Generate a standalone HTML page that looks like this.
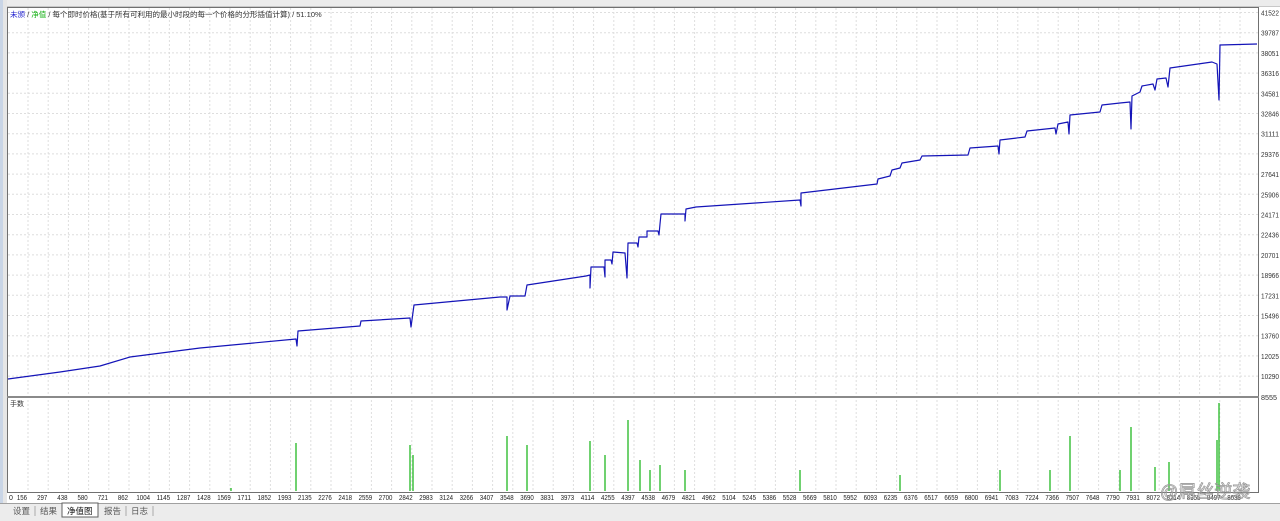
<!DOCTYPE html>
<html><head><meta charset="utf-8">
<style>
html,body{margin:0;padding:0;width:1280px;height:521px;overflow:hidden;background:#fff;font-family:"Liberation Sans","Noto Sans CJK SC",sans-serif;}
svg{position:absolute;left:0;top:0}
</style></head>
<body>
<svg id="s" width="1280" height="521" viewBox="0 0 1280 521" xmlns="http://www.w3.org/2000/svg" font-family="Liberation Sans, Noto Sans CJK SC, sans-serif">
<rect x="0" y="0" width="1280" height="521" fill="#fff"/>
<rect x="0" y="0" width="1280" height="7" fill="#ececec"/>
<line x1="0" y1="6.5" x2="1280" y2="6.5" stroke="#c8c8c8"/>
<rect x="0" y="0" width="3" height="503" fill="#c9d5e6"/>
<rect x="3" y="0" width="4" height="503" fill="#e6e6e6"/>
<g id="grid" stroke="#dedede" stroke-dasharray="2,2" stroke-width="1"></g>
<rect x="7.5" y="7.5" width="1251" height="485" fill="none" stroke="#707070"/>
<rect x="7" y="396" width="1252" height="2" fill="#8a8a8a"/>
<g id="ylab" font-size="7" fill="#333"></g>
<g id="xlab" font-size="7" fill="#222"></g>
<polyline id="eq" fill="none" stroke="#1414b8" stroke-width="1.2" stroke-linejoin="round"/>
<g id="spk" stroke="#22b822" stroke-width="1.3"></g>
<text x="10" y="17" font-size="7.5"><tspan fill="#2020d0">未颁</tspan><tspan fill="#333"> / </tspan><tspan fill="#10b010">净值</tspan><tspan fill="#333"> / 每个即时价格(基于所有可利用的最小时段的每一个价格的分形插值计算) / 51.10%</tspan></text>
<text x="10" y="406" font-size="7" fill="#333">手数</text>
<text x="1261" y="400" font-size="7" fill="#333" textLength="16" lengthAdjust="spacingAndGlyphs">8555</text>
<rect x="0" y="503" width="1280" height="18" fill="#ececec"/>
<line x1="0" y1="503.5" x2="1280" y2="503.5" stroke="#a0a0a0"/>
<rect x="62" y="503" width="36" height="14" fill="#fff" stroke="#606060"/>
<g font-size="8.5" fill="#555">
<text x="13" y="514">设置</text>
<line x1="35" y1="506" x2="35" y2="516" stroke="#aaa"/>
<text x="40" y="514">结果</text>
<text x="67" y="514" fill="#111">净值图</text>
<text x="104" y="514">报告</text>
<line x1="126" y1="506" x2="126" y2="516" stroke="#aaa"/>
<text x="131" y="514">日志</text>
<line x1="153" y1="506" x2="153" y2="516" stroke="#aaa"/>
</g>
<text x="1160" y="498" font-size="18" fill="none" stroke="#999" stroke-width="0.8">@屌丝逆袭</text>
</svg>
<script>
var NS="http://www.w3.org/2000/svg";
function el(p,t,a,txt){var e=document.createElementNS(NS,t);for(var k in a)e.setAttribute(k,a[k]);if(txt)e.textContent=txt;document.getElementById(p).appendChild(e);}
var xl="0 156 297 438 580 721 862 1004 1145 1287 1428 1569 1711 1852 1993 2135 2276 2418 2559 2700 2842 2983 3124 3266 3407 3548 3690 3831 3973 4114 4255 4397 4538 4679 4821 4962 5104 5245 5386 5528 5669 5810 5952 6093 6235 6376 6517 6659 6800 6941 7083 7224 7366 7507 7648 7790 7931 8072 8214 8355 8497 8638".split(" ");
for(var i=0;i<61;i++){var x=28+20.2*i;el("grid","line",{x1:x,y1:8,x2:x,y2:492});var s=xl[i+1];el("xlab","text",{x:x-6,y:500,"text-anchor":"middle",textLength:s.length*3.4,lengthAdjust:"spacingAndGlyphs"},s);}
el("xlab","text",{x:9,y:500},"0");
var yl="41522 39787 38051 36316 34581 32846 31111 29376 27641 25906 24171 22436 20701 18966 17231 15496 13760 12025 10290".split(" ");
for(var j=0;j<19;j++){var y=12.5+20.2*j;el("grid","line",{x1:8,y1:y,x2:1258,y2:y});el("ylab","text",{x:1261,y:y+3,textLength:18,lengthAdjust:"spacingAndGlyphs"},yl[j]);}
var pts=[[8,379],[60,372],[100,366],[130,357],[200,348],[296,339],[297,346],[298,331],[360,326],[361,321],[410,318],[411,327],[414,305],[500,297],[507,297],[507,310],[510,296],[525,296],[527,285],[586,276],[590,275],[590,288],[591,267],[604,267],[605,277],[605,260],[611,260],[612,264],[613,252],[625,253],[627,278],[628,243],[637,243],[638,247],[639,237],[647,237],[647,231],[658,231],[659,235],[660,224],[661,214],[685,214],[685,221],[686,209],[696,207],[800,200],[801,206],[801,193],[877,184],[878,179],[890,176],[892,170],[900,168],[902,163],[920,160],[922,156],[968,155],[970,148],[998,146],[999,154],[1000,140],[1025,137],[1027,131],[1055,128],[1056,134],[1058,124],[1068,122],[1069,134],[1070,115],[1100,112],[1102,105],[1120,103],[1130,102],[1131,129],[1132,96],[1140,92],[1142,86],[1153,84],[1155,90],[1157,79],[1166,78],[1168,87],[1170,68],[1212,62],[1217,64],[1219,100],[1220,45],[1257,44]];
document.getElementById("eq").setAttribute("points",pts.map(function(p){return p.join(",")}).join(" "));
var sp=[[231,488],[296,443],[410,445],[413,455],[507,436],[527,445],[590,441],[605,455],[628,420],[640,460],[650,470],[660,465],[685,470],[800,470],[900,475],[1000,470],[1050,470],[1070,436],[1120,470],[1131,427],[1155,467],[1169,462],[1219,403],[1217,440]];
sp.forEach(function(s){el("spk","line",{x1:s[0],y1:491,x2:s[0],y2:s[1]});});
</script>
</body></html>
